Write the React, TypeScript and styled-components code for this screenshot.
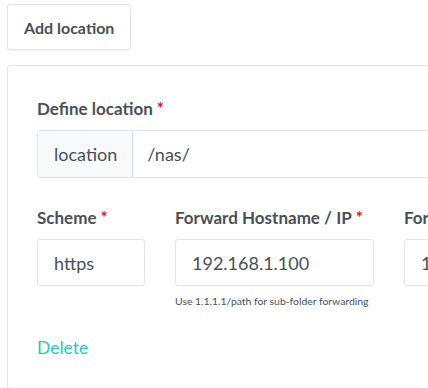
import React from "react";
import styled, { createGlobalStyle } from "styled-components";

const Global = createGlobalStyle`
  html, body { margin: 0; padding: 0; background: #fff; }
  body {
    font-family: Lato, "Liberation Sans", sans-serif;
    color: #495057;
    overflow: hidden;
  }
`;

const Page = styled.div`
  padding: 4px 0 0 7px;
  width: 500px;
`;

const AddButton = styled.button`
  display: block;
  height: 46px;
  padding: 0 16px;
  font-family: inherit;
  font-size: 16px;
  font-weight: 700;
  color: #495057;
  background: #fff;
  border: 1px solid rgba(0, 40, 100, 0.12);
  border-radius: 3px;
  box-shadow: 0 1px 1px rgba(0, 0, 0, 0.05);
`;

const Card = styled.div`
  margin-top: 15px;
  border: 1px solid rgba(0, 40, 100, 0.12);
  border-radius: 3px;
  padding: 32px 0 30px 29px;
  width: 600px;
`;

const Label = styled.div`
  font-size: 17px;
  font-weight: 700;
  line-height: 22px;
  margin-bottom: 10px;
  white-space: nowrap;
`;

const Req = styled.span`
  color: #cd201f;
  margin-left: 4px;
`;

const Group = styled.div`
  display: flex;
  height: 46px;
  border: 1px solid rgba(0, 40, 100, 0.12);
  border-radius: 3px;
`;

const Addon = styled.div`
  display: flex;
  align-items: center;
  padding: 0 15px 0 16px;
  background: #f8f9fa;
  border-right: 1px solid rgba(0, 40, 100, 0.12);
  font-size: 18px;
  border-radius: 3px 0 0 3px;
`;

const GroupInput = styled.div`
  display: flex;
  align-items: center;
  padding: 0 14px;
  font-size: 18px;
  flex: 1;
`;

const Row = styled.div`
  display: flex;
  gap: 30px;
  margin-top: 29px;
`;

const Col = styled.div<{ $w: number }>`
  width: ${(p) => p.$w}px;
  flex: none;
`;

const Input = styled.div`
  box-sizing: border-box;
  height: 47px;
  display: flex;
  align-items: center;
  padding: 0 16px;
  font-size: 18px;
  border: 1px solid rgba(0, 40, 100, 0.12);
  border-radius: 3px;
  white-space: nowrap;
`;

const Help = styled.div`
  font-size: 10.4px;
  margin-top: 9px;
  color: #495057;
  white-space: nowrap;
`;

const Delete = styled.div`
  margin-top: 30px;
  font-size: 17.5px;
  color: #2bcbba;
`;

export default function App() {
  return (
    <>
      <Global />
      <Page>
        <AddButton>Add location</AddButton>
        <Card>
          <Label>
            Define location<Req>*</Req>
          </Label>
          <Group>
            <Addon>location</Addon>
            <GroupInput>/nas/</GroupInput>
          </Group>
          <Row>
            <Col $w={108}>
              <Label>
                Scheme<Req>*</Req>
              </Label>
              <Input>https</Input>
            </Col>
            <Col $w={199}>
              <Label>
                Forward Hostname / IP<Req>*</Req>
              </Label>
              <Input>192.168.1.100</Input>
              <Help>Use 1.1.1.1/path for sub-folder forwarding</Help>
            </Col>
            <Col $w={120}>
              <Label>Forward Port</Label>
              <Input>1</Input>
            </Col>
          </Row>
          <Delete>Delete</Delete>
        </Card>
      </Page>
    </>
  );
}
